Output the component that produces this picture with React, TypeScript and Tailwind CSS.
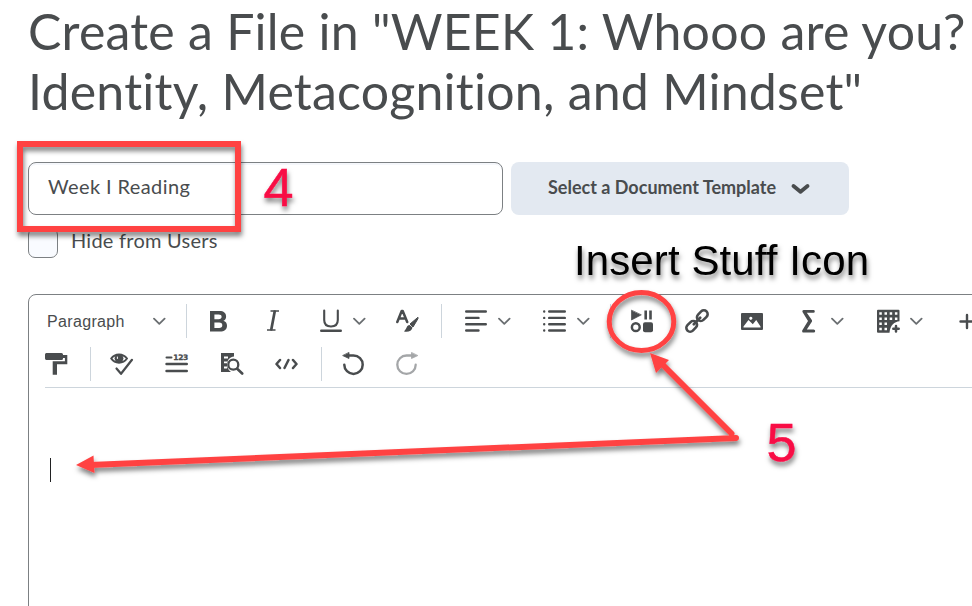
import type { ReactNode } from "react";

const INK = "#494c4e";

function Icon({ className = "", w = 24, children }: { className?: string; w?: number; children: ReactNode }) {
  return (
    <svg
      className={`shrink-0 ${className}`}
      width={w}
      height={24}
      viewBox={`0 0 ${w} 24`}
      fill="none"
      stroke={INK}
      strokeWidth={2}
      strokeLinecap="round"
      strokeLinejoin="round"
    >
      {children}
    </svg>
  );
}

function Chevron({ className = "" }: { className?: string }) {
  return (
    <Icon w={14} className={className}>
      <path d="M1 9.700l5.300 5.200 5.300-5.200" stroke="#6a6e71" strokeWidth={1.800} />
    </Icon>
  );
}

function Divider({ className = "" }: { className?: string }) {
  return <div className={`h-[34px] w-px shrink-0 bg-[#cdd5dc] ${className}`} />;
}

function ToolbarTop() {
  return (
    <div className="flex h-[34px] items-center">
      <span className="ml-[18px] w-[78px] shrink-0 pt-px text-[16px] leading-[20px] tracking-[0.35px] whitespace-nowrap">
        Paragraph
      </span>
      <Chevron className="ml-[28px]" />
      <Divider className="ml-[19px]" />
      <Icon w={22} className="ml-[21px]">
        <path
          d="M2 2h9.600c4 0 6.500 2 6.500 5.400 0 2.100-1 3.600-2.700 4.400 2.400.7 3.600 2.500 3.600 4.900 0 3.900-2.700 5.800-7 5.800H2zM6.400 5.500v4.700h4.200c2 0 3-.8 3-2.400s-1-2.300-3-2.300zm0 8v5.400h4.700c2.200 0 3.200-.9 3.200-2.700s-1-2.700-3.200-2.700z"
          fill={INK}
          fillRule="evenodd"
          stroke="none"
        />
      </Icon>
      <Icon w={22} className="ml-[32px]">
        <path d="M8.500 2h8.500M5 21h8.500" strokeWidth={1.400} strokeLinecap="butt" />
        <path d="M12.700 2.500L9.300 20.500" strokeWidth={2.700} />
      </Icon>
      <Icon w={22} className="ml-[36px]">
        <path d="M4.200 1.500V11c0 4.200 2.500 6.500 6.800 6.500s6.800-2.300 6.800-6.500V1.500" strokeWidth={2.100} />
        <path d="M1.200 21.700h19.600" strokeWidth={2.400} />
      </Icon>
      <Chevron className="ml-[11px]" />
      <Icon className="ml-[29px]">
        <path d="M1.300 13L5.700 2h1L11.200 13M3 9.500h6.600" strokeWidth={2.500} />
        <path d="M21.700 8.500L14 15l3 3 4.800-8z" fill={INK} strokeWidth={1} />
        <path d="M13.500 16c-3 .2-2.500 3.500-5.500 6.500 4 1 8-.5 8.500-4z" fill={INK} stroke="none" />
      </Icon>
      <Divider className="ml-[21px]" />
      <Icon w={22} className="ml-[23px]">
        <path d="M1.200 2.500h19.600M1.200 8.900h12.300M1.200 15.300h19.600M1.200 21.500h12.300" strokeWidth={2.400} />
      </Icon>
      <Chevron className="ml-[11px]" />
      <Icon className="ml-[31px]">
        <path
          d="M6.200 2.500h15.600M6.200 8.900h15.600M6.200 15.300h15.600M6.200 21.500h15.600M1.200 2.500v.01M1.200 8.900v.01M1.200 15.300v.01M1.200 21.500v.01"
          strokeWidth={2.400}
        />
      </Icon>
      <Chevron className="ml-[10px]" />
      <Divider className="ml-[19px]" />
      <Icon className="ml-[19px]">
        <path d="M1.500 1.500v9.500L11 6z" fill={INK} strokeWidth={0.700} />
        <path d="M15.700 1.500v9M20.500 1.500v9" strokeWidth={2.600} strokeLinecap="butt" />
        <circle cx="5.800" cy="18.200" r="3.900" strokeWidth={2.500} />
        <rect x="13" y="13.200" width="10" height="10" rx="2" fill={INK} stroke="none" />
      </Icon>
      <Icon className="ml-[31px]">
        <g transform="rotate(-45 12 12)">
          <rect x="-1.500" y="8.200" width="12" height="7.600" rx="3.800" strokeWidth={2.600} />
          <rect x="13.500" y="8.200" width="12" height="7.600" rx="3.800" strokeWidth={2.600} />
          <path d="M7.500 12h9" strokeWidth={2.800} />
        </g>
      </Icon>
      <Icon w={22} className="ml-[32px]">
        <path
          d="M1 4h20a1 1 0 0 1 1 1v15a1 1 0 0 1-1 1H1a1 1 0 0 1-1-1V5a1 1 0 0 1 1-1zM2.500 18.500h17v-1L15.200 11l-3.400 4.300L7.500 11l-5 6.500zM9.800 7.700a1.600 1.600 0 1 0 .01 0z"
          fill={INK}
          fillRule="evenodd"
          stroke="none"
        />
      </Icon>
      <Icon className="ml-[34px]">
        <path
          d="M6.500 1h9.900a1.300 1.300 0 0 1 0 2.800H9.800l5.200 7.500v1.200l-5.200 7.900h6.800a1.400 1.400 0 0 1 0 3.200H6.500a1.500 1.500 0 0 1-1-2.500L11 12 5.500 3a1.400 1.400 0 0 1 1-2z"
          fill={INK}
          stroke="none"
        />
      </Icon>
      <Chevron className="ml-[10px]" />
      <Icon className="ml-[31px]">
        <path
          d="M2 .800h20.500a1 1 0 0 1 1 1v10.500c-5 .5-9.300 3.500-10 11.500H2a1 1 0 0 1-1-1v-21a1 1 0 0 1 1-1z"
          fill={INK}
          stroke="none"
        />
        <path
          d="M3.300 3.200h2.500v2.500H3.300zM8.500 3.200H11v2.500H8.500zM13.700 3.200h2.500v2.500h-2.500zM18.900 3.200h2.500v2.500h-2.500zM3.300 8.400h2.500v2.500H3.300zM8.500 8.400H11v2.500H8.500zM13.700 8.400h2.500v2.500h-2.500zM18.900 8.400h2.500v2.500h-2.500zM3.300 13.600h2.500v2.500H3.300zM8.500 13.600H11v2.500H8.500zM3.300 18.800h2.500v2.500H3.300zM8.500 18.800H11v2.500H8.500z"
          fill="#fff"
          stroke="none"
        />
        <path d="M20 17v5.400M17.300 19.700h5.400" strokeWidth={2.500} />
      </Icon>
      <Chevron className="ml-[10px]" />
      <Icon w={16} className="ml-[35px]">
        <path d="M1.500 12.500h13M8 6v13" strokeWidth={2.400} />
      </Icon>
    </div>
  );
}

function ToolbarBottom() {
  return (
    <div className="mt-[9px] flex h-[34px] items-center">
      <Icon className="ml-[16px]">
        <path
          d="M1.300 1h15.200A1.500 1.500 0 0 1 18 2.500V3h4.300v9.300H12V22.700H7.700V9.300h12.200V6H18v.5A1.500 1.500 0 0 1 16.500 8H1.300A1.500 1.500 0 0 1 0 6.500v-4A1.500 1.500 0 0 1 1.300 1z"
          fill={INK}
          stroke="none"
        />
      </Icon>
      <Divider className="ml-[21px]" />
      <Icon className="ml-[19px]">
        <path d="M1.200 6.500C5 1 13 1 17 6.500 13 12 5 12 1.200 6.500z" strokeWidth={2} />
        <circle cx="9" cy="6.300" r="4.400" fill={INK} stroke="none" />
        <path d="M7.400 6.500V5" stroke="#fff" strokeWidth={1} />
        <path d="M6.500 16.500l4.500 5.300L22 7.800" strokeWidth={2.200} />
      </Icon>
      <Icon className="ml-[31px]">
        <path d="M1.500 5.500h5" strokeWidth={2} />
        <path d="M1.500 12h20.300M1.500 19h20.300" strokeWidth={2.400} />
        <text
          x="8.300"
          y="8"
          fontSize="7.500"
          fontWeight="700"
          fill={INK}
          stroke={INK}
          strokeWidth="0.300"
          textLength="15"
          className="font-['DejaVu_Sans',sans-serif]"
        >
          123
        </text>
      </Icon>
      <Icon className="ml-[31px]">
        <path d="M1 1h13v3.500c-4 0-7 3.800-7 8 0 3 1.500 6 4 7.500H1z" fill={INK} stroke="none" />
        <path d="M4 5.500h4M4 10.300h3M4 15.500h3" stroke="#fff" strokeWidth={1.800} strokeLinecap="butt" />
        <circle cx="13.300" cy="12.700" r="5" fill="#fff" strokeWidth={2.300} />
        <path d="M17.200 16.700l5 4.800" strokeWidth={2.600} />
      </Icon>
      <Icon className="ml-[31px]">
        <path d="M5 8l-3.500 4L5 16M18 8l3.500 4-3.500 4M13.500 8l-4 8" strokeWidth={2.500} />
      </Icon>
      <Divider className="ml-[22px]" />
      <Icon className="ml-[20px]">
        <path d="M2.300 12.700a9.200 9.200 0 1 0 9.200-9.200H6" strokeWidth={2.500} />
        <path d="M7 .800v5.700L1 3.700z" fill={INK} strokeWidth={0.800} />
      </Icon>
      <Icon className="ml-[29px]">
        <path d="M20.700 12.700a9.200 9.200 0 1 1-9.200-9.200H17" stroke="#a4a6a8" strokeWidth={2.300} />
        <path d="M16.500.800v5.700l6-2.800z" fill="#a4a6a8" stroke="#a4a6a8" strokeWidth={0.800} />
      </Icon>
    </div>
  );
}

function Annotations() {
  return (
    <svg className="pointer-events-none absolute inset-0" width={972} height={606} viewBox="0 0 972 606">
      <defs>
        <filter id="drop" x="0" y="0" width="972" height="606" filterUnits="userSpaceOnUse">
          <feDropShadow dx="1" dy="4" stdDeviation="2.500" floodColor="#000" floodOpacity="0.500" />
        </filter>
      </defs>
      <g fill="none" stroke="#ff4343" filter="url(#drop)">
        <rect x="20" y="144" width="218" height="85" strokeWidth={6} />
        <ellipse cx="641.500" cy="321.500" rx="32.300" ry="29" strokeWidth={5} />
        <path d="M731.500 433.500L660 362M736 438L90 465" strokeWidth={6} strokeLinecap="round" />
        <path d="M650 353L669 360L656 373zM76 465L93.500 455.500L94.500 473z" fill="#ff4343" stroke="none" />
      </g>
      <g className="font-['Liberation_Sans',Arial,sans-serif]" filter="url(#drop)">
        <text x="263.500" y="206" fontSize="54" fill="#f80b45" stroke="#f80b45" strokeWidth="0.500">4</text>
        <text x="766.500" y="460.500" fontSize="54" fill="#f80b45" stroke="#f80b45" strokeWidth="0.500">5</text>
        <text x="574" y="275" fontSize="42" fill="#000" textLength="295">Insert Stuff Icon</text>
      </g>
    </svg>
  );
}

export default function App() {
  return (
    <main className="relative h-[606px] w-[972px] overflow-hidden bg-white font-[Lato,sans-serif] text-[#494c4e]">
      <h1 className="ml-[28px] pt-px text-[50px] leading-[60px] font-normal tracking-[0.24px] whitespace-nowrap">
        Create a File in "WEEK 1: Whooo are you?
        <br />
        Identity, Metacognition, and Mindset"
      </h1>
      <div className="mt-[41px] ml-[28px] flex h-[53px] gap-[8px]">
        <div className="flex w-[475px] items-center rounded-[8px] border border-[#7c8083] pb-[5px] pl-[19px] text-[20px] tracking-[0.4px] shadow-[inset_0_2px_0_#f5f7fb]">
          Week I Reading
        </div>
        <button className="flex w-[338px] items-center rounded-[8px] bg-[#e3e9f1] pb-[2px] pl-[37px] text-[18px] font-bold">
          <span className="w-[229px] text-left whitespace-nowrap">Select a Document Template</span>
          <svg className="ml-[13px]" width={22} height={16} viewBox="0 0 22 16" fill="none" stroke={INK} strokeWidth={3.900} strokeLinecap="round" strokeLinejoin="round">
            <path d="M3.500 6l7 5.700 7-5.700" />
          </svg>
        </button>
      </div>
      <div className="mt-[13px] ml-[28px] flex h-[30px] items-center">
        <div className="size-[30px] rounded-[7px] border border-[#7c8083] bg-[#f9fbff]" />
        <span className="ml-[13px] pb-[6px] text-[20px] tracking-[0.25px]">Hide from Users</span>
      </div>
      <section className="mt-[36px] ml-[28px] h-[330px] w-[1000px] rounded-tl-[8px] border border-[#7c8083]">
        <div className="pt-[9px] font-['Liberation_Sans',Arial,sans-serif]">
          <ToolbarTop />
          <ToolbarBottom />
        </div>
        <div className="mt-[6px] ml-[16px] h-px bg-[#cdd5dc]" />
        <div className="mt-[70px] ml-[21px] h-[24px] w-px bg-[#202122]" />
      </section>
      <Annotations />
    </main>
  );
}
